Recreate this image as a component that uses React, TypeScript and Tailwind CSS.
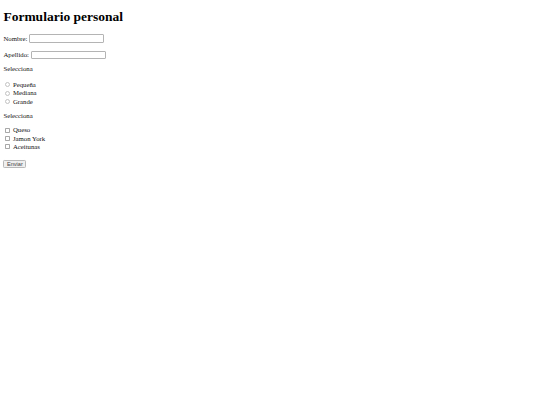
const radios = ["Pequeña", "Mediana", "Grande"];
const checks = ["Queso", "Jamon York", "Aceitunas"];

export default function App() {
  return (
    <div className="min-h-screen bg-white text-[#111] font-['Liberation_Serif',serif] text-[6.75px] leading-[7.8px] px-[3.4px] pt-[0.1px]">
      <h1 className="text-[13.5px] font-bold mt-[8.5px] leading-[15.5px] text-black">Formulario personal</h1>
      <form>
        <div className="mt-[10.2px] flex items-center h-[8.4px]">
          Nombre:
          <input type="text" className="ml-[1.7px] w-[75px] h-[8.4px] border border-[#b4b4b4] rounded-[1px] bg-white text-[5.6px]" />
        </div>
        <div className="mt-[8px] flex items-center h-[8.4px]">
          Apellido:
          <input type="text" className="ml-[1.7px] w-[75px] h-[8.4px] border border-[#b4b4b4] rounded-[1px] bg-white text-[5.6px]" />
        </div>
        <p className="mt-[6.2px]">Selecciona</p>
        <div className="mt-[7.5px]">
          {radios.map((s) => (
            <label key={s} className="flex items-center h-[8.35px]">
              <input
                type="radio"
                name="size"
                className="appearance-none shrink-0 ml-[2px] mr-[2.6px] w-[5px] h-[5px] m-0 rounded-full border border-[#c2c2c2] bg-white"
              />
              {s}
            </label>
          ))}
        </div>
        <p className="mt-[6.2px]">Selecciona</p>
        <div className="mt-[6.4px]">
          {checks.map((s) => (
            <label key={s} className="flex items-center h-[8.3px]">
              <input
                type="checkbox"
                className="appearance-none shrink-0 ml-[2px] mr-[2.6px] w-[5px] h-[5px] m-0 rounded-[0.8px] border border-[#a8a8a8] bg-white"
              />
              {s}
            </label>
          ))}
        </div>
        <div className="mt-[9px]">
          <button type="button" className="h-[8.4px] w-[23px] border border-[#b8b8b8] rounded-[1.3px] bg-[#efefef] text-[#444] text-[5.6px] leading-[6px] font-['Liberation_Sans',sans-serif]">
            Enviar
          </button>
        </div>
      </form>
    </div>
  );
}
